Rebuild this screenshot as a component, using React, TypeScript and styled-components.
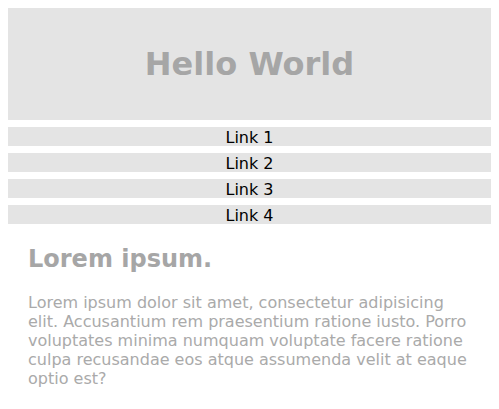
import React from "react";
import styled, { createGlobalStyle } from "styled-components";

const Global = createGlobalStyle`
  body {
    margin: 8px;
    font-family: "DejaVu Sans", Verdana, sans-serif;
    background: #fff;
  }
`;

const Page = styled.div`
  display: flex;
  flex-direction: column;
  gap: 7px;
`;

const Header = styled.header`
  background: #e4e4e4;
  height: 112px;
  display: flex;
  align-items: center;
  justify-content: center;
`;

const Title = styled.h1`
  margin: 0;
  font-size: 32px;
  font-weight: bold;
  color: #a6a6a6;
`;

const Nav = styled.nav`
  display: flex;
  flex-direction: column;
  gap: 7px;
`;

const NavLink = styled.a`
  display: block;
  background: #e4e4e4;
  height: 19px;
  line-height: 21px;
  text-align: center;
  color: #000;
  font-size: 16px;
  text-decoration: none;
`;

const Content = styled.section`
  padding: 14px 20px 0;
`;

const Heading = styled.h2`
  margin: 0 0 20px;
  font-size: 24px;
  font-weight: bold;
  color: #a6a6a6;
`;

const Text = styled.p`
  margin: 0;
  font-size: 16px;
  color: #aaaaaa;
`;

export default function App() {
  return (
    <>
      <Global />
      <Page>
        <Header>
          <Title>Hello World</Title>
        </Header>
        <Nav>
          {[1, 2, 3, 4].map((n) => (
            <NavLink key={n} href="#">Link {n}</NavLink>
          ))}
        </Nav>
        <Content>
          <Heading>Lorem ipsum.</Heading>
          <Text>
            Lorem ipsum dolor sit amet, consectetur adipisicing elit. Accusantium rem praesentium ratione iusto. Porro voluptates minima numquam voluptate facere ratione culpa recusandae eos atque assumenda velit at eaque optio est?
          </Text>
        </Content>
      </Page>
    </>
  );
}
